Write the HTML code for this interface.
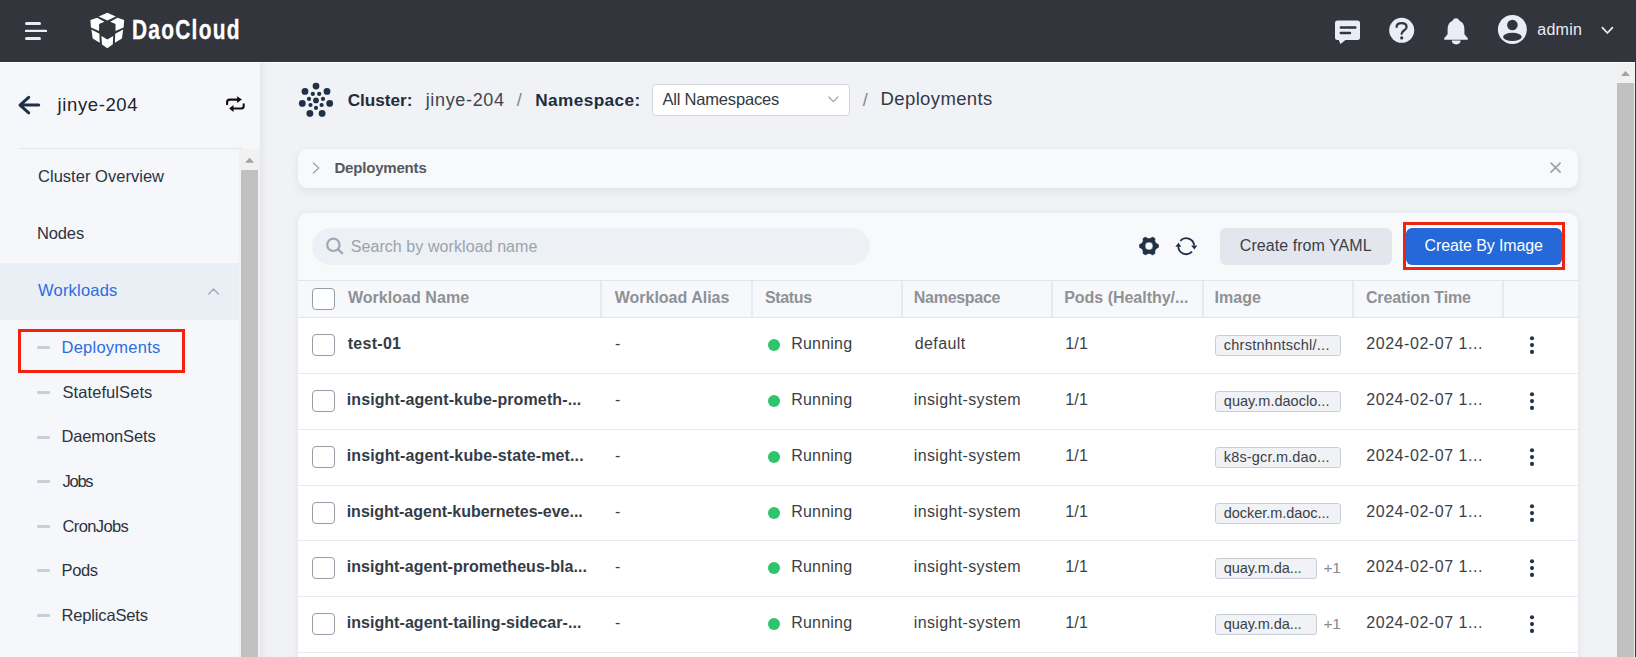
<!DOCTYPE html>
<html><head><meta charset="utf-8"><title>DaoCloud - Deployments</title>
<style>
html,body{margin:0;padding:0;width:1636px;height:657px;overflow:hidden;background:#f0f2f5;}
body{position:relative;font-family:"Liberation Sans",sans-serif;}
.r{position:absolute;}
.t{position:absolute;white-space:nowrap;}
svg{overflow:visible;}
</style></head><body>
<div class="r" style="left:0px;top:0px;width:1636px;height:62px;background:#32353b;"></div>
<div class="r" style="left:0px;top:62px;width:1635px;height:1px;background:#ffffff;"></div>
<svg class="r" style="left:0;top:0" width="60" height="62"><g fill="#e9edf5">
<rect x="25" y="22" width="16" height="3" rx="1.5"/><rect x="25" y="29.8" width="22" height="2.3" rx="0.6"/><rect x="25" y="37" width="16" height="3" rx="1.5"/></g></svg>
<svg class="r" style="left:86px;top:8px" width="44" height="44"><g fill="#ffffff"><polygon points="21.3,4.7 29.8,8.6 21.3,12.6 12.7,8.6"/><polygon points="4.4,12.1 11.2,9.7 18.4,13.7 13.1,16.1 13.1,23.1 5.0,19.4"/><polygon points="5.4,21.4 13.4,25.8 13.7,34.8 6.7,30.5"/><polygon points="15.4,28.1 21.3,31.5 27.2,28.1 26.8,36.3 21.3,40.2 16.0,36.5"/><polygon points="38.2,12.1 31.400000000000002,9.7 24.200000000000003,13.7 29.5,16.1 29.5,23.1 37.6,19.4"/><polygon points="37.2,21.4 29.200000000000003,25.8 28.900000000000002,34.8 35.9,30.5"/></g></svg>
<div class="t" style="left:131.50px;top:16.12px;font-size:27.5px;line-height:27.5px;color:#ffffff;font-weight:700;letter-spacing:1.650px;transform:scaleX(0.76);transform-origin:0 0;-webkit-text-stroke:0.35px #fff;">DaoCloud</div>
<svg class="r" style="left:1330px;top:14px" width="36" height="34">
<path d="M7.5,6.5 h20 a2.5,2.5 0 0 1 2.5,2.5 v14.4 a2.5,2.5 0 0 1 -2.5,2.5 h-12 l-5,4 l-1.8,-4 h-1.2 a2.5,2.5 0 0 1 -2.5,-2.5 v-14.4 a2.5,2.5 0 0 1 2.5,-2.5 z" fill="#e9edf5"/>
<path d="M10.8,13.5 h14.6 M10.8,19 h9.2" stroke="#32353b" stroke-width="2.4" stroke-linecap="round"/></svg>
<svg class="r" style="left:1384px;top:12px" width="36" height="36">
<circle cx="17.7" cy="18.3" r="12.5" fill="#e9edf5"/>
<path d="M12.6,15 C12.6,12.6 14.8,11.2 17.6,11.2 C20.6,11.2 22.6,12.8 22.6,15.2 C22.6,18.2 17.6,18.4 17.6,21.8" fill="none" stroke="#32353b" stroke-width="2.2" stroke-linecap="round"/>
<circle cx="17.7" cy="25.9" r="1.6" fill="#32353b"/></svg>
<svg class="r" style="left:1444px;top:17.5px" width="25" height="28">
<path d="M12,0.3 C13.8,0.3 15,1.5 15.4,2.8 C18.6,4 20.4,7 20.4,11 L20.4,16.3 L23.8,20.2 Q24.5,21.7 23,21.7 L1,21.7 Q-0.5,21.7 0.2,20.2 L3.6,16.3 L3.6,11 C3.6,7 5.4,4 8.6,2.8 C9,1.5 10.2,0.3 12,0.3 Z" fill="#e9edf5"/>
<path d="M7.8,22.6 L16.6,22.6 A4.4,3.8 0 0 1 7.8,22.6 Z" fill="#e9edf5"/></svg>
<svg class="r" style="left:1494px;top:12px" width="38" height="36">
<circle cx="18.4" cy="17.5" r="14.5" fill="#e9edf5"/>
<circle cx="18.4" cy="13" r="5.3" fill="#32353b"/>
<ellipse cx="18.4" cy="24.9" rx="9.3" ry="4.1" fill="#32353b"/></svg>
<div class="t" style="left:1537.30px;top:22.16px;font-size:16px;line-height:16px;color:#e9edf5;letter-spacing:0.255px;">admin</div>
<svg class="r" style="left:1598px;top:22px" width="20" height="16"><path d="M4.4,5.6 L9.4,11 L14.4,5.6" fill="none" stroke="#e9edf5" stroke-width="1.8" stroke-linecap="round" stroke-linejoin="round"/></svg>
<div class="r" style="left:1635px;top:0px;width:1px;height:657px;background:#32353b;"></div>
<div class="r" style="left:0px;top:63px;width:260px;height:594px;background:#f5f7fb;"></div>
<svg class="r" style="left:15px;top:90px" width="30" height="30"><path d="M13.7,7.3 L5,15.1 L13.7,22.8 M5.5,15.1 H23.7" fill="none" stroke="#1f3047" stroke-width="3" stroke-linecap="round" stroke-linejoin="round"/></svg>
<div class="t" style="left:57.60px;top:95.64px;font-size:18.5px;line-height:18.5px;color:#1b232d;letter-spacing:0.602px;">jinye-204</div>
<svg class="r" style="left:220px;top:90px" width="30" height="30">
<path d="M7.1,14.2 V12.2 Q7.1,9.6 9.7,9.6 H17.6 M23.7,14.2 V16 Q23.7,18.5 21.2,18.5 H13.4" fill="none" stroke="#111" stroke-width="2.1" stroke-linecap="round"/>
<path d="M17.1,6.2 L21.9,9.6 L17.1,13 Z M13.5,15.1 L9.1,18.5 L13.5,21.9 Z" fill="#111"/></svg>
<div class="r" style="left:19px;top:148px;width:223px;height:1px;background:#e1e4ea;"></div>
<div class="t" style="left:38.00px;top:168.43px;font-size:16.5px;line-height:16.5px;color:#2b3340;letter-spacing:0.027px;">Cluster Overview</div>
<div class="t" style="left:37.00px;top:225.43px;font-size:16.5px;line-height:16.5px;color:#2b3340;letter-spacing:-0.136px;">Nodes</div>
<div class="r" style="left:0px;top:263px;width:239px;height:57px;background:#eaeef5;"></div>
<div class="t" style="left:38.00px;top:282.13px;font-size:16.5px;line-height:16.5px;color:#2d6ddd;letter-spacing:0.214px;">Workloads</div>
<svg class="r" style="left:204px;top:284px" width="20" height="16"><path d="M4.7,10.0 L9.6,5.0 L14.5,10.0" fill="none" stroke="#a7aeb9" stroke-width="1.5" stroke-linecap="round" stroke-linejoin="round"/></svg>
<div class="r" style="left:37px;top:346px;width:13px;height:3px;background:#c9ced7;border-radius:1px;"></div>
<div class="t" style="left:61.50px;top:339.23px;font-size:16.5px;line-height:16.5px;color:#2d6ddd;letter-spacing:0.246px;">Deployments</div>
<div class="r" style="left:37px;top:391px;width:13px;height:3px;background:#c9ced7;border-radius:1px;"></div>
<div class="t" style="left:62.50px;top:383.83px;font-size:16.5px;line-height:16.5px;color:#2b3340;letter-spacing:0.080px;">StatefulSets</div>
<div class="r" style="left:37px;top:436px;width:13px;height:3px;background:#c9ced7;border-radius:1px;"></div>
<div class="t" style="left:61.50px;top:428.43px;font-size:16.5px;line-height:16.5px;color:#2b3340;letter-spacing:-0.137px;">DaemonSets</div>
<div class="r" style="left:37px;top:480px;width:13px;height:3px;background:#c9ced7;border-radius:1px;"></div>
<div class="t" style="left:62.50px;top:473.03px;font-size:16.5px;line-height:16.5px;color:#2b3340;letter-spacing:-1.268px;">Jobs</div>
<div class="r" style="left:37px;top:525px;width:13px;height:3px;background:#c9ced7;border-radius:1px;"></div>
<div class="t" style="left:62.50px;top:517.63px;font-size:16.5px;line-height:16.5px;color:#2b3340;letter-spacing:-0.609px;">CronJobs</div>
<div class="r" style="left:37px;top:569px;width:13px;height:3px;background:#c9ced7;border-radius:1px;"></div>
<div class="t" style="left:61.50px;top:562.23px;font-size:16.5px;line-height:16.5px;color:#2b3340;letter-spacing:-0.353px;">Pods</div>
<div class="r" style="left:37px;top:614px;width:13px;height:3px;background:#c9ced7;border-radius:1px;"></div>
<div class="t" style="left:61.50px;top:606.83px;font-size:16.5px;line-height:16.5px;color:#2b3340;letter-spacing:-0.159px;">ReplicaSets</div>
<div class="r" style="left:18px;top:329px;width:167px;height:44px;background:transparent;box-sizing:border-box;border:3px solid #f1220e;"></div>
<div class="r" style="left:239px;top:149px;width:21px;height:508px;background:#f1f1f1;"></div>
<svg class="r" style="left:239px;top:149px" width="21" height="20"><path d="M6,13.8 L10.6,8.8 L15.2,13.8 Z" fill="#a3a3a3"/></svg>
<div class="r" style="left:241px;top:170px;width:17px;height:487px;background:#c1c1c1;"></div>
<div class="r" style="left:260px;top:63px;width:1355px;height:594px;background:#f0f2f5;"></div>
<div class="r" style="left:260px;top:63px;width:8px;height:594px;background:linear-gradient(90deg, rgba(0,0,0,0.045), rgba(0,0,0,0));"></div>
<div class="r" style="left:1615px;top:63px;width:20px;height:594px;background:#f1f1f1;"></div>
<svg class="r" style="left:1615px;top:63px" width="20" height="20"><path d="M5.9,12.9 L10.5,7.9 L15.1,12.9 Z" fill="#a3a3a3"/></svg>
<div class="r" style="left:1617px;top:83px;width:17px;height:574px;background:#c1c1c1;"></div>
<svg class="r" style="left:290px;top:75px" width="50" height="50"><g fill="#1f3047"><circle cx="26.0" cy="11.1" r="3.4"/><circle cx="15.0" cy="16.4" r="3.4"/><circle cx="37.0" cy="16.4" r="3.4"/><circle cx="12.3" cy="28.4" r="3.4"/><circle cx="39.7" cy="28.4" r="3.4"/><circle cx="19.9" cy="38.4" r="3.4"/><circle cx="32.1" cy="38.4" r="3.4"/><circle cx="26.0" cy="25.4" r="2.9"/><circle cx="22.8" cy="18.9" r="2.1"/><circle cx="29.2" cy="18.9" r="2.1"/><circle cx="19.0" cy="23.9" r="2.1"/><circle cx="33.0" cy="23.9" r="2.1"/><circle cx="20.5" cy="30.0" r="2.1"/><circle cx="31.6" cy="30.0" r="2.1"/><circle cx="26.0" cy="32.9" r="2.1"/></g></svg>
<div class="t" style="left:347.70px;top:91.64px;font-size:17.2px;line-height:17.2px;color:#1f2d3d;font-weight:700;letter-spacing:-0.031px;">Cluster:</div>
<div class="t" style="left:425.70px;top:90.76px;font-size:18px;line-height:18px;color:#3d4450;letter-spacing:0.658px;">jinye-204</div>
<div class="t" style="left:516.80px;top:90.76px;font-size:18px;line-height:18px;color:#80858d;">/</div>
<div class="t" style="left:535.20px;top:91.64px;font-size:17.2px;line-height:17.2px;color:#1f2d3d;font-weight:700;letter-spacing:0.417px;">Namespace:</div>
<div class="r" style="left:652px;top:84px;width:198px;height:32px;background:#ffffff;box-sizing:border-box;border:1px solid #d2d6dd;border-radius:4px;"></div>
<div class="t" style="left:662.40px;top:91.23px;font-size:16.5px;line-height:16.5px;color:#323945;letter-spacing:-0.182px;">All Namespaces</div>
<svg class="r" style="left:824px;top:92px" width="20" height="16"><path d="M5,5 L9.4,9.6 L13.8,5" fill="none" stroke="#a0a6b0" stroke-width="1.35" stroke-linecap="round" stroke-linejoin="round"/></svg>
<div class="t" style="left:862.70px;top:90.76px;font-size:18px;line-height:18px;color:#80858d;">/</div>
<div class="t" style="left:880.60px;top:90.04px;font-size:18.5px;line-height:18.5px;color:#323945;letter-spacing:0.369px;">Deployments</div>
<div class="r" style="left:298px;top:149px;width:1280px;height:39px;background:#f8f9fb;border-radius:9px;box-shadow:0 3px 8px rgba(30,40,60,0.08);"></div>
<svg class="r" style="left:308px;top:159.4px" width="16" height="18"><path d="M5.4,4.0 L10.8,9 L5.4,14.0" fill="none" stroke="#a0a7b2" stroke-width="1.45" stroke-linecap="round" stroke-linejoin="round"/></svg>
<div class="t" style="left:334.40px;top:160.30px;font-size:15px;line-height:15px;color:#56585e;font-weight:700;letter-spacing:-0.185px;">Deployments</div>
<svg class="r" style="left:1545px;top:157px" width="22" height="22"><path d="M6.1,6.1 L15.1,15.1 M15.1,6.1 L6.1,15.1" fill="none" stroke="#9aa3b0" stroke-width="1.7" stroke-linecap="round"/></svg>
<div class="r" style="left:298px;top:213px;width:1280px;height:460px;background:#f8f9fb;border-radius:9px;box-shadow:0 0 7px rgba(30,40,60,0.07);"></div>
<div class="r" style="left:312px;top:228px;width:558px;height:37px;background:#edf0f5;border-radius:18.5px;"></div>
<svg class="r" style="left:322px;top:235px" width="24" height="24"><circle cx="11.4" cy="9.8" r="6.2" fill="none" stroke="#9ea7b4" stroke-width="2.2"/><path d="M16.2,14.6 L20.2,18.2" stroke="#9ea7b4" stroke-width="2.3" stroke-linecap="round"/></svg>
<div class="t" style="left:350.70px;top:238.56px;font-size:16px;line-height:16px;color:#9ba3b0;letter-spacing:0.078px;">Search by workload name</div>
<svg class="r" style="left:1139.1px;top:236.2px" width="20" height="20"><path d="M19.48,8.50 A9.6,9.6 0 0 1 19.48,11.50 Q15.11,12.95 16.04,17.46 A9.6,9.6 0 0 1 13.44,18.96 Q10.00,15.90 6.56,18.96 A9.6,9.6 0 0 1 3.96,17.46 Q4.89,12.95 0.52,11.50 A9.6,9.6 0 0 1 0.52,8.50 Q4.89,7.05 3.96,2.54 A9.6,9.6 0 0 1 6.56,1.04 Q10.00,4.10 13.44,1.04 A9.6,9.6 0 0 1 16.04,2.54 Q15.11,7.05 19.48,8.50 Z M10,6 A4,4 0 1 0 10,14 A4,4 0 1 0 10,6 Z" fill="#1f3047" fill-rule="evenodd" stroke="#1f3047" stroke-width="0.5" stroke-linejoin="round"/></svg>
<svg class="r" style="left:1172px;top:234px" width="28" height="24">
<path d="M8.3,6.9 A7.9,7.9 0 0 1 22.1,11.5 M20.0,17.6 A7.9,7.9 0 0 1 6.3,12.2" fill="none" stroke="#1f3047" stroke-width="1.8"/>
<path d="M19.2,11.4 L25.3,11.4 L22.3,15.6 Z M3.3,12.8 L6.5,8.8 L9.3,12.8 Z" fill="#1f3047"/></svg>
<div class="r" style="left:1220px;top:228px;width:172px;height:37px;background:#e3e6ed;border-radius:6px;"></div>
<div class="t" style="left:1239.80px;top:237.76px;font-size:16px;line-height:16px;color:#39404c;letter-spacing:0.053px;">Create from YAML</div>
<div class="r" style="left:1403px;top:222px;width:162px;height:48px;background:#ffffff;box-sizing:border-box;border:3px solid #f1220e;"></div>
<div class="r" style="left:1406px;top:228px;width:156px;height:37px;background:#2468d9;border-radius:6px;"></div>
<div class="t" style="left:1424.60px;top:237.76px;font-size:16px;line-height:16px;color:#ffffff;letter-spacing:-0.125px;">Create By Image</div>
<div class="r" style="left:298px;top:280px;width:1280px;height:38px;background:#f7f8fb;"></div>
<div class="r" style="left:298px;top:280px;width:1280px;height:1px;background:#e2e5ea;"></div>
<div class="r" style="left:298px;top:317px;width:1280px;height:1px;background:#e2e5ea;"></div>
<div class="r" style="left:600px;top:281px;width:2px;height:36px;background:#e6e9ee;"></div>
<div class="r" style="left:751px;top:281px;width:2px;height:36px;background:#e6e9ee;"></div>
<div class="r" style="left:901px;top:281px;width:2px;height:36px;background:#e6e9ee;"></div>
<div class="r" style="left:1051px;top:281px;width:2px;height:36px;background:#e6e9ee;"></div>
<div class="r" style="left:1202px;top:281px;width:2px;height:36px;background:#e6e9ee;"></div>
<div class="r" style="left:1352px;top:281px;width:2px;height:36px;background:#e6e9ee;"></div>
<div class="r" style="left:1502px;top:281px;width:2px;height:36px;background:#e6e9ee;"></div>
<div class="r" style="left:312px;top:288px;width:23px;height:22px;background:#ffffff;box-sizing:border-box;border:1px solid #979da6;border-radius:4px;"></div>
<div class="t" style="left:347.90px;top:290.06px;font-size:16px;line-height:16px;color:#8e9196;font-weight:700;letter-spacing:0.048px;">Workload Name</div>
<div class="t" style="left:614.70px;top:290.06px;font-size:16px;line-height:16px;color:#8e9196;font-weight:700;letter-spacing:0.001px;">Workload Alias</div>
<div class="t" style="left:764.90px;top:290.06px;font-size:16px;line-height:16px;color:#8e9196;font-weight:700;letter-spacing:-0.340px;">Status</div>
<div class="t" style="left:913.80px;top:290.06px;font-size:16px;line-height:16px;color:#8e9196;font-weight:700;letter-spacing:-0.281px;">Namespace</div>
<div class="t" style="left:1064.20px;top:290.06px;font-size:16px;line-height:16px;color:#8e9196;font-weight:700;letter-spacing:-0.020px;">Pods (Healthy/...</div>
<div class="t" style="left:1214.60px;top:290.06px;font-size:16px;line-height:16px;color:#8e9196;font-weight:700;letter-spacing:0.039px;">Image</div>
<div class="t" style="left:1365.90px;top:290.06px;font-size:16px;line-height:16px;color:#8e9196;font-weight:700;letter-spacing:-0.108px;">Creation Time</div>
<div class="r" style="left:298px;top:318px;width:1280px;height:55px;background:#ffffff;"></div>
<div class="r" style="left:298px;top:373px;width:1280px;height:1px;background:#e8eaee;"></div>
<div class="r" style="left:312px;top:334px;width:23px;height:22px;background:#ffffff;box-sizing:border-box;border:1px solid #979da6;border-radius:4px;"></div>
<div class="t" style="left:347.70px;top:335.66px;font-size:16px;line-height:16px;color:#353c47;font-weight:700;letter-spacing:0.287px;">test-01</div>
<div class="t" style="left:615.10px;top:335.66px;font-size:16px;line-height:16px;color:#3a3f47;">-</div>
<div class="r" style="left:768.2px;top:338.8px;width:12px;height:12px;border-radius:6px;background:#2ec46d"></div>
<div class="t" style="left:791.20px;top:336.16px;font-size:16px;line-height:16px;color:#3a3f47;letter-spacing:0.216px;">Running</div>
<div class="t" style="left:914.80px;top:335.66px;font-size:16px;line-height:16px;color:#3a3f47;letter-spacing:0.384px;">default</div>
<div class="t" style="left:1065.30px;top:335.66px;font-size:16px;line-height:16px;color:#3a3f47;letter-spacing:0.128px;">1/1</div>
<div class="r" style="left:1215.3px;top:335px;width:125.5px;height:21px;background:#f0f2f5;box-sizing:border-box;border:1px solid #c9ced6;border-radius:3px;"></div>
<div class="t" style="left:1223.80px;top:337.73px;font-size:14.5px;line-height:14.5px;color:#3a3f47;letter-spacing:0.255px;">chrstnhntschl/...</div>
<div class="t" style="left:1366.30px;top:335.66px;font-size:16px;line-height:16px;color:#3a3f47;letter-spacing:0.544px;">2024-02-07 1...</div>
<svg class="r" style="left:1522px;top:334px" width="20" height="24"><g fill="#1f3047"><circle cx="10" cy="4.2" r="2.05"/><circle cx="10" cy="11.1" r="2.05"/><circle cx="10" cy="17.9" r="2.05"/></g></svg>
<div class="r" style="left:298px;top:374px;width:1280px;height:55px;background:#ffffff;"></div>
<div class="r" style="left:298px;top:429px;width:1280px;height:1px;background:#e8eaee;"></div>
<div class="r" style="left:312px;top:390px;width:23px;height:22px;background:#ffffff;box-sizing:border-box;border:1px solid #979da6;border-radius:4px;"></div>
<div class="t" style="left:346.70px;top:391.66px;font-size:16px;line-height:16px;color:#353c47;font-weight:700;letter-spacing:0.119px;">insight-agent-kube-prometh-...</div>
<div class="t" style="left:615.10px;top:391.66px;font-size:16px;line-height:16px;color:#3a3f47;">-</div>
<div class="r" style="left:768.2px;top:394.8px;width:12px;height:12px;border-radius:6px;background:#2ec46d"></div>
<div class="t" style="left:791.20px;top:392.16px;font-size:16px;line-height:16px;color:#3a3f47;letter-spacing:0.216px;">Running</div>
<div class="t" style="left:913.80px;top:391.66px;font-size:16px;line-height:16px;color:#3a3f47;letter-spacing:0.352px;">insight-system</div>
<div class="t" style="left:1065.30px;top:391.66px;font-size:16px;line-height:16px;color:#3a3f47;letter-spacing:0.128px;">1/1</div>
<div class="r" style="left:1215.3px;top:391px;width:125.5px;height:21px;background:#f0f2f5;box-sizing:border-box;border:1px solid #c9ced6;border-radius:3px;"></div>
<div class="t" style="left:1223.80px;top:393.73px;font-size:14.5px;line-height:14.5px;color:#3a3f47;letter-spacing:0.021px;">quay.m.daoclo...</div>
<div class="t" style="left:1366.30px;top:391.66px;font-size:16px;line-height:16px;color:#3a3f47;letter-spacing:0.544px;">2024-02-07 1...</div>
<svg class="r" style="left:1522px;top:390px" width="20" height="24"><g fill="#1f3047"><circle cx="10" cy="4.2" r="2.05"/><circle cx="10" cy="11.1" r="2.05"/><circle cx="10" cy="17.9" r="2.05"/></g></svg>
<div class="r" style="left:298px;top:430px;width:1280px;height:55px;background:#ffffff;"></div>
<div class="r" style="left:298px;top:485px;width:1280px;height:1px;background:#e8eaee;"></div>
<div class="r" style="left:312px;top:446px;width:23px;height:22px;background:#ffffff;box-sizing:border-box;border:1px solid #979da6;border-radius:4px;"></div>
<div class="t" style="left:346.70px;top:447.66px;font-size:16px;line-height:16px;color:#353c47;font-weight:700;letter-spacing:0.135px;">insight-agent-kube-state-met...</div>
<div class="t" style="left:615.10px;top:447.66px;font-size:16px;line-height:16px;color:#3a3f47;">-</div>
<div class="r" style="left:768.2px;top:450.8px;width:12px;height:12px;border-radius:6px;background:#2ec46d"></div>
<div class="t" style="left:791.20px;top:448.16px;font-size:16px;line-height:16px;color:#3a3f47;letter-spacing:0.216px;">Running</div>
<div class="t" style="left:913.80px;top:447.66px;font-size:16px;line-height:16px;color:#3a3f47;letter-spacing:0.352px;">insight-system</div>
<div class="t" style="left:1065.30px;top:447.66px;font-size:16px;line-height:16px;color:#3a3f47;letter-spacing:0.128px;">1/1</div>
<div class="r" style="left:1215.3px;top:447px;width:125.5px;height:21px;background:#f0f2f5;box-sizing:border-box;border:1px solid #c9ced6;border-radius:3px;"></div>
<div class="t" style="left:1223.80px;top:449.73px;font-size:14.5px;line-height:14.5px;color:#3a3f47;letter-spacing:0.165px;">k8s-gcr.m.dao...</div>
<div class="t" style="left:1366.30px;top:447.66px;font-size:16px;line-height:16px;color:#3a3f47;letter-spacing:0.544px;">2024-02-07 1...</div>
<svg class="r" style="left:1522px;top:446px" width="20" height="24"><g fill="#1f3047"><circle cx="10" cy="4.2" r="2.05"/><circle cx="10" cy="11.1" r="2.05"/><circle cx="10" cy="17.9" r="2.05"/></g></svg>
<div class="r" style="left:298px;top:486px;width:1280px;height:54px;background:#ffffff;"></div>
<div class="r" style="left:298px;top:540px;width:1280px;height:1px;background:#e8eaee;"></div>
<div class="r" style="left:312px;top:502px;width:23px;height:22px;background:#ffffff;box-sizing:border-box;border:1px solid #979da6;border-radius:4px;"></div>
<div class="t" style="left:346.70px;top:503.66px;font-size:16px;line-height:16px;color:#353c47;font-weight:700;letter-spacing:-0.012px;">insight-agent-kubernetes-eve...</div>
<div class="t" style="left:615.10px;top:503.66px;font-size:16px;line-height:16px;color:#3a3f47;">-</div>
<div class="r" style="left:768.2px;top:506.8px;width:12px;height:12px;border-radius:6px;background:#2ec46d"></div>
<div class="t" style="left:791.20px;top:504.16px;font-size:16px;line-height:16px;color:#3a3f47;letter-spacing:0.216px;">Running</div>
<div class="t" style="left:913.80px;top:503.66px;font-size:16px;line-height:16px;color:#3a3f47;letter-spacing:0.352px;">insight-system</div>
<div class="t" style="left:1065.30px;top:503.66px;font-size:16px;line-height:16px;color:#3a3f47;letter-spacing:0.128px;">1/1</div>
<div class="r" style="left:1215.3px;top:503px;width:125.5px;height:21px;background:#f0f2f5;box-sizing:border-box;border:1px solid #c9ced6;border-radius:3px;"></div>
<div class="t" style="left:1223.80px;top:505.73px;font-size:14.5px;line-height:14.5px;color:#3a3f47;letter-spacing:-0.050px;">docker.m.daoc...</div>
<div class="t" style="left:1366.30px;top:503.66px;font-size:16px;line-height:16px;color:#3a3f47;letter-spacing:0.544px;">2024-02-07 1...</div>
<svg class="r" style="left:1522px;top:502px" width="20" height="24"><g fill="#1f3047"><circle cx="10" cy="4.2" r="2.05"/><circle cx="10" cy="11.1" r="2.05"/><circle cx="10" cy="17.9" r="2.05"/></g></svg>
<div class="r" style="left:298px;top:541px;width:1280px;height:55px;background:#ffffff;"></div>
<div class="r" style="left:298px;top:596px;width:1280px;height:1px;background:#e8eaee;"></div>
<div class="r" style="left:312px;top:557px;width:23px;height:22px;background:#ffffff;box-sizing:border-box;border:1px solid #979da6;border-radius:4px;"></div>
<div class="t" style="left:346.70px;top:558.66px;font-size:16px;line-height:16px;color:#353c47;font-weight:700;letter-spacing:0.034px;">insight-agent-prometheus-bla...</div>
<div class="t" style="left:615.10px;top:558.66px;font-size:16px;line-height:16px;color:#3a3f47;">-</div>
<div class="r" style="left:768.2px;top:561.8px;width:12px;height:12px;border-radius:6px;background:#2ec46d"></div>
<div class="t" style="left:791.20px;top:559.16px;font-size:16px;line-height:16px;color:#3a3f47;letter-spacing:0.216px;">Running</div>
<div class="t" style="left:913.80px;top:558.66px;font-size:16px;line-height:16px;color:#3a3f47;letter-spacing:0.352px;">insight-system</div>
<div class="t" style="left:1065.30px;top:558.66px;font-size:16px;line-height:16px;color:#3a3f47;letter-spacing:0.128px;">1/1</div>
<div class="r" style="left:1215.3px;top:558px;width:102px;height:21px;background:#f0f2f5;box-sizing:border-box;border:1px solid #c9ced6;border-radius:3px;"></div>
<div class="t" style="left:1223.80px;top:560.73px;font-size:14.5px;line-height:14.5px;color:#3a3f47;letter-spacing:-0.081px;">quay.m.da...</div>
<div class="t" style="left:1323.40px;top:559.88px;font-size:15.5px;line-height:15.5px;color:#868a91;letter-spacing:-0.252px;">+1</div>
<div class="t" style="left:1366.30px;top:558.66px;font-size:16px;line-height:16px;color:#3a3f47;letter-spacing:0.544px;">2024-02-07 1...</div>
<svg class="r" style="left:1522px;top:557px" width="20" height="24"><g fill="#1f3047"><circle cx="10" cy="4.2" r="2.05"/><circle cx="10" cy="11.1" r="2.05"/><circle cx="10" cy="17.9" r="2.05"/></g></svg>
<div class="r" style="left:298px;top:597px;width:1280px;height:55px;background:#ffffff;"></div>
<div class="r" style="left:298px;top:652px;width:1280px;height:1px;background:#e8eaee;"></div>
<div class="r" style="left:312px;top:613px;width:23px;height:22px;background:#ffffff;box-sizing:border-box;border:1px solid #979da6;border-radius:4px;"></div>
<div class="t" style="left:346.70px;top:614.66px;font-size:16px;line-height:16px;color:#353c47;font-weight:700;letter-spacing:0.054px;">insight-agent-tailing-sidecar-...</div>
<div class="t" style="left:615.10px;top:614.66px;font-size:16px;line-height:16px;color:#3a3f47;">-</div>
<div class="r" style="left:768.2px;top:617.8px;width:12px;height:12px;border-radius:6px;background:#2ec46d"></div>
<div class="t" style="left:791.20px;top:615.16px;font-size:16px;line-height:16px;color:#3a3f47;letter-spacing:0.216px;">Running</div>
<div class="t" style="left:913.80px;top:614.66px;font-size:16px;line-height:16px;color:#3a3f47;letter-spacing:0.352px;">insight-system</div>
<div class="t" style="left:1065.30px;top:614.66px;font-size:16px;line-height:16px;color:#3a3f47;letter-spacing:0.128px;">1/1</div>
<div class="r" style="left:1215.3px;top:614px;width:102px;height:21px;background:#f0f2f5;box-sizing:border-box;border:1px solid #c9ced6;border-radius:3px;"></div>
<div class="t" style="left:1223.80px;top:616.73px;font-size:14.5px;line-height:14.5px;color:#3a3f47;letter-spacing:-0.081px;">quay.m.da...</div>
<div class="t" style="left:1323.40px;top:615.88px;font-size:15.5px;line-height:15.5px;color:#868a91;letter-spacing:-0.252px;">+1</div>
<div class="t" style="left:1366.30px;top:614.66px;font-size:16px;line-height:16px;color:#3a3f47;letter-spacing:0.544px;">2024-02-07 1...</div>
<svg class="r" style="left:1522px;top:613px" width="20" height="24"><g fill="#1f3047"><circle cx="10" cy="4.2" r="2.05"/><circle cx="10" cy="11.1" r="2.05"/><circle cx="10" cy="17.9" r="2.05"/></g></svg>
<div class="r" style="left:298px;top:653px;width:1280px;height:55px;background:#ffffff;"></div>
<div class="r" style="left:298px;top:708px;width:1280px;height:1px;background:#e8eaee;"></div>
</body></html>
